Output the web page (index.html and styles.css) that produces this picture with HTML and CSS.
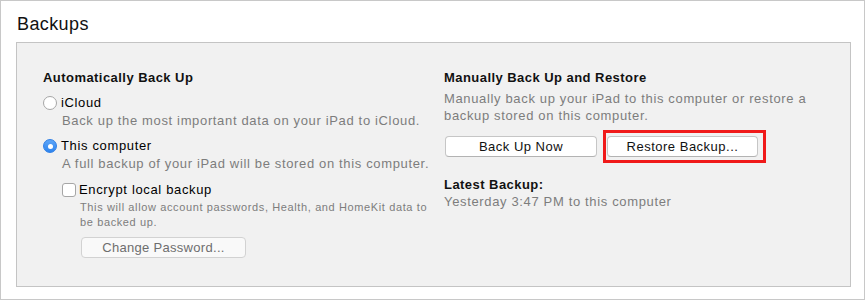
FILE: index.html
```html
<!DOCTYPE html>
<html>
<head>
<meta charset="utf-8">
<link rel="stylesheet" href="styles.css">
</head>
<body>
<div class="frame">
  <div class="title">Backups</div>
  <div class="panel">
    <div class="col left">
      <div class="heading">Automatically Back Up</div>
      <div class="option first">
        <span class="radio"></span><span class="label">iCloud</span>
      </div>
      <div class="desc indent">Back up the most important data on your iPad to iCloud.</div>
      <div class="option second">
        <span class="radio on"><span class="dot"></span></span><span class="label">This computer</span>
      </div>
      <div class="desc indent">A full backup of your iPad will be stored on this computer.</div>
      <div class="check-row">
        <span class="checkbox"></span><span class="label">Encrypt local backup</span>
      </div>
      <div class="small">This will allow account passwords, Health, and HomeKit data to<br>be backed up.</div>
      <div class="btn disabled pw">Change Password...</div>
    </div>
    <div class="col right">
      <div class="heading">Manually Back Up and Restore</div>
      <div class="desc manual">Manually back up your iPad to this computer or restore a<br>backup stored on this computer.</div>
      <div class="buttons">
        <div class="btn wide">Back Up Now</div>
        <div class="btn-wrap">
          <div class="btn wide restore">Restore Backup...</div>
          <div class="highlight"></div>
        </div>
      </div>
      <div class="heading latest">Latest Backup:</div>
      <div class="desc when">Yesterday 3:47 PM to this computer</div>
    </div>
  </div>
</div>
</body>
</html>
```
FILE: styles.css
```css
* { box-sizing: border-box; }
html, body { margin: 0; padding: 0; background: #fff; }
body { font-family: "Liberation Sans", Arial, sans-serif; color: #000; }

.frame {
  width: 865px;
  height: 300px;
  border: 1px solid #c8c8c8;
  padding: 12px 13px 0 15px;
  background: #fff;
}
.title {
  font-size: 18px;
  line-height: 22px;
  padding-left: 1px;
  letter-spacing: 0.4px;
  color: #111;
}
.panel {
  margin-top: 7px;
  height: 245px;
  background: #f1f1f1;
  border: 1px solid #c4c4c4;
  padding: 27px 0 0 26px;
  display: grid;
  grid-template-columns: 401px 1fr;
  font-size: 13px;
  letter-spacing: 0.65px;
}
.col { display: flex; flex-direction: column; align-items: flex-start; }
.heading { font-weight: bold; line-height: 16px; color: #111; letter-spacing: 0.45px; }
.option { display: flex; align-items: center; line-height: 16px; }
.option.first { margin-top: 9px; }
.option.second { margin-top: 7px; }
.radio {
  width: 14px; height: 14px;
  border-radius: 50%;
  border: 1px solid #a6a6a6;
  background: #fff;
  margin-right: 4px;
  display: flex; align-items: center; justify-content: center;
}
.radio.on {
  border-color: #2f7fe6;
  background: linear-gradient(#5ea6f8, #2d84ee);
}
.dot { width: 5px; height: 5px; border-radius: 50%; background: #fff; }
.desc { color: #7d7d7d; line-height: 20px; }
.indent { padding-left: 19px; }
.check-row {
  display: flex; align-items: center;
  line-height: 16px;
  margin-top: 8px;
  padding-left: 19px;
}
.checkbox {
  width: 14px; height: 14px;
  border: 1px solid #a6a6a6;
  border-radius: 3px;
  background: #fff;
  margin-right: 3px;
}
.small {
  font-size: 11px;
  line-height: 15px;
  color: #7d7d7d;
  padding-left: 37px;
  margin-top: 2px;
  letter-spacing: 0.62px;
}
.btn {
  height: 21px;
  background: #fff;
  border: 1px solid #c6c6c6;
  border-bottom-color: #b3b3b3;
  border-radius: 4px;
  text-align: center;
  line-height: 19px;
  font-size: 13px;
  color: #111;
  letter-spacing: 0.5px;
}
.btn.disabled { color: #6e6e6e; background: #f9f9f9; border-color: #d2d2d2; }
.pw { margin-left: 38px; margin-top: 7px; width: 165px; letter-spacing: 0.3px; }
.desc.manual { line-height: 17px; margin-top: 4px; }
.buttons { display: flex; gap: 10px; margin-top: 12px; margin-left: 1px; }
.wide { width: 152px; }
.restore { width: 151px; }
.btn-wrap { position: relative; }
.highlight {
  position: absolute;
  left: -4px; top: -6px;
  width: 163px; height: 33px;
  border: 3px solid #f01a1a;
}
.heading.latest { margin-top: 20px; }
.desc.when { line-height: 17px; }
```
